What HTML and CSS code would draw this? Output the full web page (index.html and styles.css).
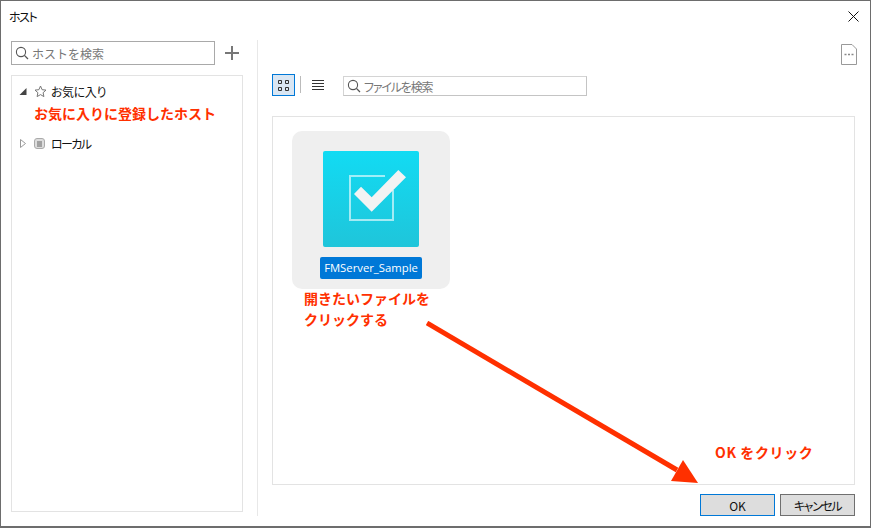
FILE: index.html
```html
<!DOCTYPE html>
<html lang="ja">
<head>
  <meta charset="UTF-8" />
  <title>ホスト</title>
  <link rel="stylesheet" href="styles.css">
</head>
<body>

  <div class="window">
    <div class="title-bar">
      <span class="title">ホスト</span>
      <svg class="close" width="11" height="11" viewBox="0 0 11 11"><path d="M0.5 0.5L10.5 10.5M10.5 0.5L0.5 10.5" stroke="#111" fill="none"/></svg>
    </div>

    <div class="content">
      <div class="sidebar">
        <div class="sidebar-top">
          <div class="search host-search">
            <svg width="14" height="14" viewBox="0 0 14 14"><circle cx="6" cy="6" r="4.6" stroke="#555" fill="none" stroke-width="1.1"/><path d="M9.4 9.4L13 13" stroke="#555" stroke-width="1.3"/></svg>
            <span>ホストを検索</span>
          </div>
          <svg class="add" width="14" height="14" viewBox="0 0 14 14"><path d="M7 0V14M0 7H14" stroke="#777" stroke-width="2"/></svg>
        </div>
        <div class="tree">
          <div class="tree-row">
            <svg class="arrow" width="7" height="7" viewBox="0 0 7 7"><path d="M7 0V7H0Z" fill="#444"/></svg>
            <svg class="node-icon" width="13" height="13" viewBox="0 0 13 13"><path d="M6.5 1L8.1 4.7L12 5.1L9.1 7.7L9.9 11.6L6.5 9.6L3.1 11.6L3.9 7.7L1 5.1L4.9 4.7Z" stroke="#777" fill="none"/></svg>
            <span>お気に入り</span>
          </div>
          <div class="note note-favorite">お気に入りに登録したホスト</div>
          <div class="tree-row local-row">
            <svg class="arrow" width="6" height="9" viewBox="0 0 6 9"><path d="M0.5 0.5L5.5 4.5L0.5 8.5Z" stroke="#999" fill="#fff"/></svg>
            <svg class="node-icon" width="11" height="11" viewBox="0 0 11 11"><rect x="0.5" y="0.5" width="10" height="10" rx="2.5" fill="#ddd" stroke="#aaa"/><path d="M3 4H8M3 6H8M3 8H8" stroke="#666"/></svg>
            <span>ローカル</span>
          </div>
        </div>
      </div>

      <div class="main">
        <div class="doc-row">
          <svg width="16" height="21" viewBox="0 0 16 21"><path d="M0.5 0.5H11L15.5 5V20.5H0.5Z" stroke="#999" fill="#fff"/><path d="M3.5 10.5H5.5M7 10.5H9M10.5 10.5H12.5" stroke="#888" stroke-width="1.6"/></svg>
        </div>
        <div class="toolbar">
          <div class="view-btn">
            <svg width="11" height="11" viewBox="0 0 11 11"><path d="M0.5 0.5H3.5V3.5H0.5ZM7.5 0.5H10.5V3.5H7.5ZM0.5 7.5H3.5V10.5H0.5ZM7.5 7.5H10.5V10.5H7.5Z" stroke="#333" fill="none"/></svg>
          </div>
          <div class="toolbar-sep"></div>
          <svg class="list-icon" width="12" height="11" viewBox="0 0 12 11"><path d="M0 0.5H12M0 3.5H12M0 6.5H12M0 9.5H12" stroke="#333"/></svg>
          <div class="search file-search">
            <svg width="14" height="14" viewBox="0 0 14 14"><circle cx="6" cy="6" r="4.6" stroke="#555" fill="none" stroke-width="1.1"/><path d="M9.4 9.4L13 13" stroke="#555" stroke-width="1.3"/></svg>
            <span>ファイルを検索</span>
          </div>
        </div>

        <div class="files">
          <div class="file-card">
            <div class="file-thumb">
              <svg width="96" height="96" viewBox="0 0 96 96">
                <path d="M62 25H27V69H70V39" stroke="#fff" stroke-opacity="0.6" stroke-width="2" fill="none"/>
                <path d="M31 43L48.7 60.7L83 26.3L75.3 19L48.7 46.3L38 35.7Z" fill="#f3f3f3"/>
              </svg>
            </div>
            <div class="file-name">FMServer_Sample</div>
          </div>
          <div class="note note-open">開きたいファイルを<br>クリックする</div>
          <div class="note note-ok">OK をクリック</div>
          <svg class="big-arrow" width="290" height="170" viewBox="0 0 290 170">
            <path d="M1 2L251 149" stroke="#ff3000" stroke-width="5" fill="none"/>
            <path d="M257 139L272 162L245 160Z" fill="#ff3000"/>
          </svg>
        </div>

        <div class="buttons">
          <button class="btn btn-default">OK</button>
          <button class="btn btn-cancel">キャンセル</button>
        </div>
      </div>
    </div>
  </div>

</body>
</html>
```

FILE: styles.css
```css
* {
  box-sizing: border-box;
  margin: 0;
  padding: 0;
}

body {
  background: white;
  font-family: 'Noto Sans CJK JP', 'Liberation Sans', sans-serif;
  font-size: 12px;
  font-feature-settings: "palt";
  color: #111;
}

.window {
  width: 871px;
  height: 528px;
  border: 1px solid #6d6d6d;
  border-bottom-width: 2px;
  display: flex;
  flex-direction: column;
  overflow: hidden;
}

.title-bar {
  height: 30px;
  padding: 0 11px 0 8px;
  display: flex;
  justify-content: space-between;
  align-items: center;
  flex-shrink: 0;
}

.title {
  letter-spacing: -1.5px;
}

.content {
  flex: 1;
  display: flex;
  padding-left: 10px;
}

.sidebar {
  width: 247px;
  height: 476px;
  margin-top: 9px;
  padding-right: 14px;
  border-right: 1px solid #e8e8e8;
}

.sidebar-top {
  display: flex;
  align-items: center;
  padding-top: 1px;
  gap: 10px;
}

.search {
  display: flex;
  align-items: center;
  gap: 3px;
  border: 1px solid #a9a9a9;
  background: white;
  color: #777;
  padding-left: 3px;
}

.host-search {
  width: 204px;
  height: 24px;
  font-feature-settings: normal;
}

.tree {
  width: 232px;
  height: 437px;
  margin-top: 10px;
  border: 1px solid #e3e3e3;
  padding-top: 6px;
}

.tree-row {
  height: 18px;
  display: flex;
  align-items: center;
  padding-left: 7px;
  letter-spacing: -0.4px;
}

.tree-row .arrow {
  width: 8px;
  flex-shrink: 0;
}

.tree-row .node-icon {
  margin-left: 7px;
  margin-right: 4px;
}

.local-row {
  margin-top: 12px;
  letter-spacing: -1.6px;
}

.local-row .node-icon {
  margin-right: 6px;
}

.note {
  color: #ff3000;
  font-weight: bold;
  font-size: 14px;
  font-feature-settings: normal;
  letter-spacing: normal;
}

.note-favorite {
  padding-left: 22px;
  margin-top: 4px;
  line-height: 18px;
}

.main {
  width: 599px;
  padding-left: 14px;
  position: relative;
}

.doc-row {
  height: 27px;
  margin-top: 13px;
  display: flex;
  justify-content: flex-end;
  align-items: flex-start;
}

.toolbar {
  display: flex;
  align-items: flex-start;
  height: 24px;
  margin-top: 3px;
}

.view-btn {
  width: 23px;
  height: 22px;
  border: 1px solid #0078d7;
  background: #d9e6f3;
  display: flex;
  align-items: center;
  justify-content: center;
}

.toolbar-sep {
  width: 1px;
  height: 17px;
  background: #bbb;
  margin-left: 5px;
  margin-top: 2px;
}

.list-icon {
  margin-left: 11px;
  margin-top: 6px;
}

.file-search {
  width: 244px;
  height: 20px;
  margin-left: 19px;
  margin-top: 2px;
  border: 1px solid #c4c4c4;
  border-top-color: #d4d4d4;
  border-left-color: #d4d4d4;
  letter-spacing: -1.2px;
}

.files {
  position: relative;
  width: 583px;
  height: 369px;
  margin-top: 18px;
  border: 1px solid #e3e3e3;
  padding: 14px 0 0 19px;
}

.file-card {
  width: 158px;
  height: 158px;
  background: #efefef;
  border-radius: 10px;
  padding-top: 20px;
  display: flex;
  flex-direction: column;
  align-items: center;
}

.file-thumb {
  width: 96px;
  height: 96px;
  border-radius: 2px;
  background: linear-gradient(#12dbf3, #1fc5da);
}

.file-thumb svg {
  display: block;
}

.file-name {
  margin-top: 10px;
  height: 22px;
  line-height: 22px;
  padding: 0 4.5px;
  background: #0078d7;
  color: white;
  border-radius: 2px;
  font-family: 'Open Sans', 'Liberation Sans', sans-serif;
  font-size: 11.3px;
  white-space: nowrap;
}

.note-open {
  position: absolute;
  left: 31px;
  top: 171px;
  line-height: 21px;
}

.note-ok {
  position: absolute;
  left: 442px;
  top: 325px;
  letter-spacing: 0.6px;
}

.big-arrow {
  position: absolute;
  left: 153px;
  top: 204px;
}

.buttons {
  display: flex;
  justify-content: flex-end;
  gap: 5px;
  margin-top: 9px;
  width: 583px;
}

.btn {
  width: 75px;
  height: 22px;
  border: 1px solid #6f6f6f;
  background: #dddddd;
  font-family: inherit;
  font-size: 12px;
  font-feature-settings: "palt";
  color: #111;
}

.btn-default {
  border-color: #0078d7;
}

.btn-cancel {
  letter-spacing: -1.4px;
}
```
